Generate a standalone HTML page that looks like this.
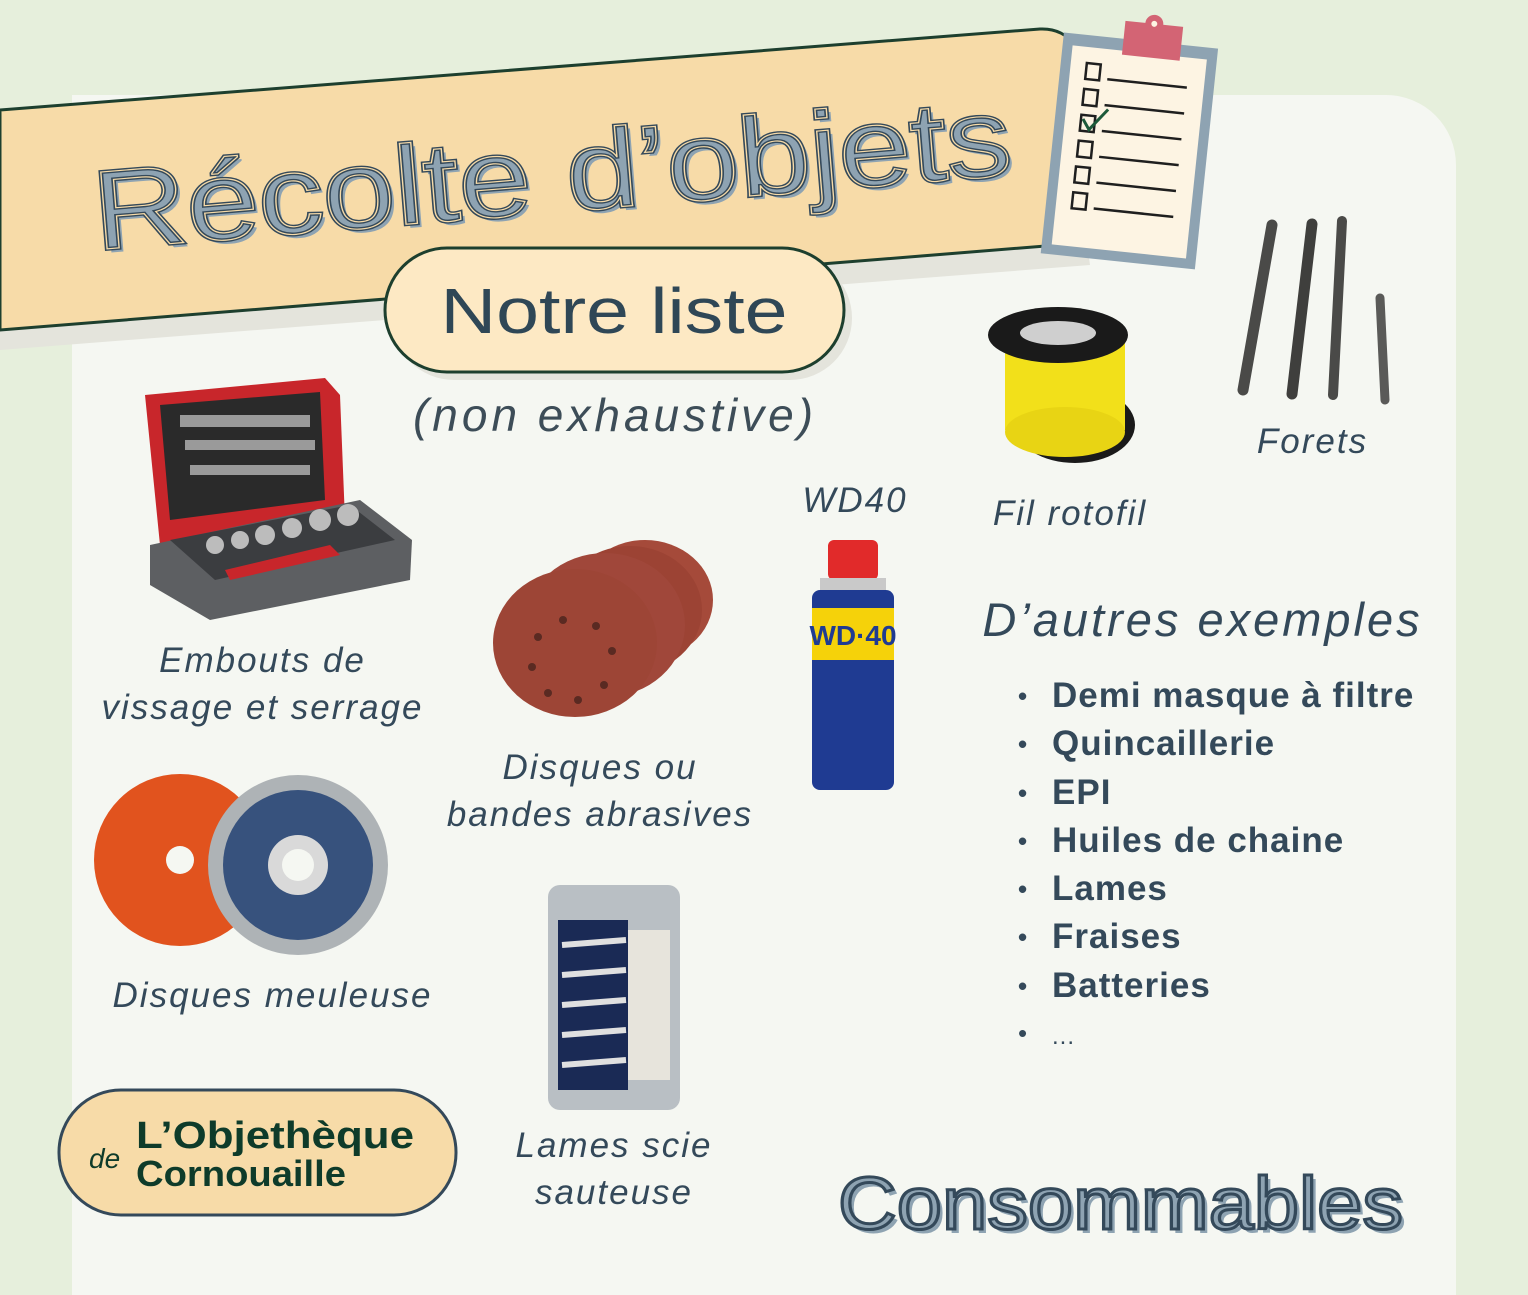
<!DOCTYPE html>
<html><head><meta charset="utf-8"><style>
html,body{margin:0;padding:0}
body{width:1528px;height:1281px;overflow:hidden;background:#e6efdc;font-family:"Liberation Sans",sans-serif;position:relative}
.lbl{position:absolute;font-style:italic;color:#34495a;font-size:35px;text-align:center;line-height:47px;letter-spacing:2px;white-space:nowrap}
.list{position:absolute;left:1018px;top:672px;margin:0;padding:0;list-style:none;font-weight:bold;color:#34495a;font-size:35px;line-height:47.3px;letter-spacing:1px}
.list li:before{content:"•";display:inline-block;width:34px;font-size:26px;vertical-align:2px}
</style></head><body>
<div style="position:absolute;left:72px;top:95px;width:1384px;height:1200px;background:#f5f7f2;border-radius:0 70px 0 0"></div>
<svg width="1528" height="1281" style="position:absolute;left:0;top:0">
 <polygon points="0,130 1060,50 1090,265 0,350" fill="#e4e4dc"/>
 <path d="M0,110 L1040,29 Q1062,28 1075,45 L1075,225 Q1072,242 1058,245 L0,330 Z" fill="#f7dba8" stroke="#1d3f2e" stroke-width="3"/>
 <g transform="rotate(-4.7 555 212)">
  <text x="559" y="216" text-anchor="middle" font-family="Liberation Sans" font-size="112" textLength="920" lengthAdjust="spacingAndGlyphs" fill="#8ea3b2">Récolte d’objets</text>
  <text x="555" y="212" text-anchor="middle" font-family="Liberation Sans" font-size="112" textLength="920" lengthAdjust="spacingAndGlyphs" fill="#8ea3b2" stroke="#34495a" stroke-width="4">Récolte d’objets</text>
  <text x="555" y="212" text-anchor="middle" font-family="Liberation Sans" font-size="112" textLength="920" lengthAdjust="spacingAndGlyphs" fill="none" stroke="#f7dba8" stroke-width="1.2">Récolte d’objets</text>
 </g>
 <g transform="rotate(6 1130 150)">
  <rect x="1052" y="40" width="155" height="222" fill="#8ea3b2"/>
  <rect x="1062" y="52" width="135" height="200" fill="#fdf4e3"/>
  <rect x="1112" y="22" width="58" height="34" fill="#d36474"/>
  <circle cx="1141" cy="22" r="9" fill="#d36474"/><circle cx="1141" cy="22" r="3" fill="#fdf4e3"/>
  <g fill="none" stroke="#1f1f1f" stroke-width="2.5">
   <rect x="1078" y="68" width="14" height="16"/><line x1="1100" y1="82" x2="1180" y2="82"/>
   <rect x="1078" y="94" width="14" height="16"/><line x1="1100" y1="108" x2="1180" y2="108"/>
   <rect x="1078" y="120" width="14" height="16"/><line x1="1100" y1="134" x2="1180" y2="134"/>
   <rect x="1078" y="146" width="14" height="16"/><line x1="1100" y1="160" x2="1180" y2="160"/>
   <rect x="1078" y="172" width="14" height="16"/><line x1="1100" y1="186" x2="1180" y2="186"/>
   <rect x="1078" y="198" width="14" height="16"/><line x1="1100" y1="212" x2="1180" y2="212"/>
  </g>
  <path d="M1080,124 L1087,134 L1104,112" fill="none" stroke="#1d5a3a" stroke-width="3"/>
 </g>
 <rect x="392" y="256" width="460" height="124" rx="62" fill="#e4e4dc"/>
 <rect x="385" y="248" width="459" height="124" rx="62" fill="#fde9c4" stroke="#1d3f2e" stroke-width="3"/>
 <text x="614" y="333" text-anchor="middle" font-family="Liberation Sans" font-size="64" textLength="347" lengthAdjust="spacingAndGlyphs" fill="#2f4756">Notre liste</text>
 <g>
  <path d="M145,395 L325,378 L340,395 L345,520 L160,545 Z" fill="#c8262b"/>
  <path d="M160,405 L320,392 L325,500 L170,520 Z" fill="#2a2a2a"/>
  <g fill="#9a9a9a"><rect x="180" y="415" width="130" height="12"/><rect x="185" y="440" width="130" height="10"/><rect x="190" y="465" width="120" height="10"/></g>
  <path d="M150,545 L360,500 L412,540 L410,580 L210,620 L150,585 Z" fill="#5d5f62"/>
  <path d="M170,540 L350,505 L395,540 L215,580 Z" fill="#3b3d40"/>
  <g fill="#bcbcbc"><circle cx="215" cy="545" r="9"/><circle cx="240" cy="540" r="9"/><circle cx="265" cy="535" r="10"/><circle cx="292" cy="528" r="10"/><circle cx="320" cy="520" r="11"/><circle cx="348" cy="515" r="11"/></g>
  <path d="M225,570 L330,545 L340,555 L230,580Z" fill="#c8262b"/>
 </g>
 <g>
  <ellipse cx="645" cy="600" rx="68" ry="60" fill="#a54a3a"/>
  <ellipse cx="630" cy="610" rx="72" ry="64" fill="#9c4334"/>
  <ellipse cx="605" cy="625" rx="80" ry="72" fill="#a0473a"/>
  <ellipse cx="575" cy="643" rx="82" ry="74" fill="#9d4536"/>
 </g>
 <g fill="#5a2a22"><circle cx="538" cy="637" r="4"/><circle cx="563" cy="620" r="4"/><circle cx="596" cy="626" r="4"/><circle cx="612" cy="651" r="4"/><circle cx="604" cy="685" r="4"/><circle cx="578" cy="700" r="4"/><circle cx="548" cy="693" r="4"/><circle cx="532" cy="667" r="4"/></g>
 <rect x="828" y="540" width="50" height="40" rx="6" fill="#e12a2a"/>
 <rect x="820" y="578" width="66" height="14" fill="#c9c9c9"/>
 <rect x="812" y="590" width="82" height="200" rx="8" fill="#1f3b92"/>
 <rect x="812" y="608" width="82" height="52" fill="#f5d20a"/>
 <text x="853" y="645" text-anchor="middle" font-family="Liberation Sans" font-weight="bold" font-size="28" fill="#1f3b92">WD·40</text>
 <ellipse cx="1075" cy="425" rx="60" ry="38" fill="#1a1a1a"/>
 <rect x="1005" y="340" width="120" height="90" fill="#f2e01a"/>
 <ellipse cx="1065" cy="432" rx="60" ry="25" fill="#e8d414"/>
 <ellipse cx="1058" cy="335" rx="70" ry="28" fill="#1a1a1a"/>
 <ellipse cx="1058" cy="333" rx="38" ry="12" fill="#cfcfcf"/>
 <g stroke-linecap="round">
  <line x1="1272" y1="225" x2="1243" y2="390" stroke="#4a4a48" stroke-width="11"/>
  <line x1="1312" y1="224" x2="1292" y2="394" stroke="#3f3f3d" stroke-width="11"/>
  <line x1="1342" y1="221" x2="1333" y2="395" stroke="#4a4a48" stroke-width="10"/>
  <line x1="1380" y1="298" x2="1385" y2="400" stroke="#5a5a58" stroke-width="9"/>
 </g>
 <circle cx="180" cy="860" r="86" fill="#e1531e"/>
 <circle cx="180" cy="860" r="14" fill="#f5f7f2"/>
 <circle cx="298" cy="865" r="90" fill="#aeb3b6"/>
 <circle cx="298" cy="865" r="75" fill="#37527d"/>
 <circle cx="298" cy="865" r="30" fill="#d9d9d9"/>
 <circle cx="298" cy="865" r="16" fill="#f5f7f2"/>
 <rect x="548" y="885" width="132" height="225" rx="12" fill="#b9bfc4"/>
 <rect x="558" y="920" width="70" height="170" fill="#1a2a55"/>
 <rect x="628" y="930" width="42" height="150" fill="#e7e4dc"/>
 <g stroke="#e0e0e0" stroke-width="6"><line x1="562" y1="945" x2="626" y2="940"/><line x1="562" y1="975" x2="626" y2="970"/><line x1="562" y1="1005" x2="626" y2="1000"/><line x1="562" y1="1035" x2="626" y2="1030"/><line x1="562" y1="1065" x2="626" y2="1060"/></g>
 <rect x="59" y="1090" width="397" height="125" rx="62" fill="#f7dba8" stroke="#34495a" stroke-width="3"/>
 <text x="136" y="1148" font-family="Liberation Sans" font-weight="bold" font-size="38" textLength="278" lengthAdjust="spacingAndGlyphs" fill="#0e3b2a">L’Objethèque</text>
 <text x="136" y="1186" font-family="Liberation Sans" font-weight="bold" font-size="36" textLength="210" lengthAdjust="spacingAndGlyphs" fill="#0e3b2a">Cornouaille</text>
 <text x="89" y="1168" font-family="Liberation Sans" font-style="italic" font-size="28" fill="#0e3b2a">de</text>
 <text x="842" y="1233" font-family="Liberation Sans" font-size="74" textLength="565" lengthAdjust="spacingAndGlyphs" fill="#8ea3b2">Consommables</text>
 <text x="838" y="1229" font-family="Liberation Sans" font-size="74" textLength="565" lengthAdjust="spacingAndGlyphs" fill="#8ea3b2" stroke="#34495a" stroke-width="3">Consommables</text>
</svg>
<div class="lbl" style="left:400px;top:392px;width:430px;font-size:46px;color:#3d4d58;letter-spacing:4px">(non exhaustive)</div>
<div class="lbl" style="left:60px;top:637px;width:405px">Embouts de<br>vissage et serrage</div>
<div class="lbl" style="left:400px;top:744px;width:400px">Disques ou<br>bandes abrasives</div>
<div class="lbl" style="left:780px;top:477px;width:150px">WD40</div>
<div class="lbl" style="left:970px;top:490px;width:200px">Fil rotofil</div>
<div class="lbl" style="left:1230px;top:418px;width:165px">Forets</div>
<div class="lbl" style="left:75px;top:972px;width:395px">Disques meuleuse</div>
<div class="lbl" style="left:460px;top:1122px;width:308px">Lames scie<br>sauteuse</div>
<div class="lbl" style="left:960px;top:596px;width:485px;font-size:47px;letter-spacing:3px">D’autres exemples</div>
<ul class="list"><li>Demi masque à filtre</li><li>Quincaillerie</li><li>EPI</li><li>Huiles de chaine</li><li>Lames</li><li>Fraises</li><li>Batteries</li><li style="font-weight:normal;font-size:24px">...</li></ul>
</body></html>
